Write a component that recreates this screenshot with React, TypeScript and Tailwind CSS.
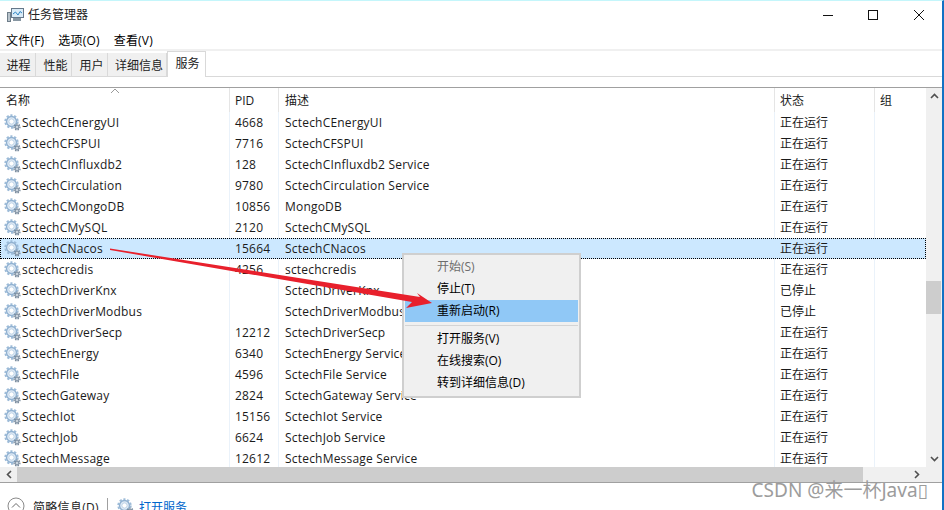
import React from 'react';

const services = [
  ['SctechCEnergyUI', '4668', 'SctechCEnergyUI', '正在运行'],
  ['SctechCFSPUI', '7716', 'SctechCFSPUI', '正在运行'],
  ['SctechCInfluxdb2', '128', 'SctechCInfluxdb2 Service', '正在运行'],
  ['SctechCirculation', '9780', 'SctechCirculation Service', '正在运行'],
  ['SctechCMongoDB', '10856', 'MongoDB', '正在运行'],
  ['SctechCMySQL', '2120', 'SctechCMySQL', '正在运行'],
  ['SctechCNacos', '15664', 'SctechCNacos', '正在运行'],
  ['sctechcredis', '4256', 'sctechcredis', '正在运行'],
  ['SctechDriverKnx', '', 'SctechDriverKnx', '已停止'],
  ['SctechDriverModbus', '', 'SctechDriverModbus', '已停止'],
  ['SctechDriverSecp', '12212', 'SctechDriverSecp', '正在运行'],
  ['SctechEnergy', '6340', 'SctechEnergy Service', '正在运行'],
  ['SctechFile', '4596', 'SctechFile Service', '正在运行'],
  ['SctechGateway', '2824', 'SctechGateway Service', '正在运行'],
  ['SctechIot', '15156', 'SctechIot Service', '正在运行'],
  ['SctechJob', '6624', 'SctechJob Service', '正在运行'],
  ['SctechMessage', '12612', 'SctechMessage Service', '正在运行'],
];

const tabs = [
  { label: '进程', cls: 'w-[36px] pl-[2px]' },
  { label: '性能', cls: 'w-[36px] pl-[4px]' },
  { label: '用户', cls: 'w-[36px] pl-[4px]' },
  { label: '详细信息', cls: 'w-[59px] pl-[4px]' },
];

function Gears() {
  return (
    <svg width="17" height="17" viewBox="0 0 17 17" className="shrink-0">
      <circle cx="7.5" cy="7.5" r="5" fill="#dfeaf5" stroke="#8fb0d0" strokeWidth="1.4" />
      <circle cx="7.5" cy="7.5" r="6.2" fill="none" stroke="#9dbbd8" strokeWidth="2" strokeDasharray="2.2 1.7" />
      <circle cx="7.5" cy="7.5" r="2.6" fill="#fff" stroke="#b4cce2" strokeWidth="0.8" />
      <circle cx="13" cy="13" r="2" fill="#c9d3dc" stroke="#6f8296" strokeWidth="1" />
      <circle cx="13" cy="13" r="3" fill="none" stroke="#75889b" strokeWidth="1.2" strokeDasharray="1.4 1.2" />
    </svg>
  );
}

function MenuItem({ label, disabled, active }: { label: string; disabled?: boolean; active?: boolean }) {
  return (
    <div
      className={`h-[22px] pl-[32px] flex items-center pb-px ${active ? 'bg-[#90c8f6]' : ''} ${disabled ? 'text-[#6d6d6d]' : 'text-black'}`}
    >
      {label}
    </div>
  );
}

export default function App() {
  return (
    <div
      className="relative w-[944px] h-[510px] overflow-hidden bg-white text-[12px] text-[#1a1a1a] border-t border-t-[#c4f6fb] border-r-2 border-r-[#1272c4] flex flex-col"
      style={{ fontFamily: '"Open Sans", "Noto Sans CJK SC", sans-serif' }}
    >
      {/* title bar */}
      <div className="h-[28px] shrink-0 flex items-center pl-[7px]">
        <svg width="17" height="16" viewBox="0 0 17 16" className="shrink-0">
          <rect x="4.5" y="1.5" width="12" height="9" fill="#d9ebf7" stroke="#66788a" />
          <path d="M6 7 L8.5 5 L11 8 L13 4.5 L15 6" fill="none" stroke="#2f86c4" strokeWidth="1" />
          <rect x="0.5" y="5.5" width="3" height="9" fill="#b9c4cc" stroke="#6f7e8a" />
          <rect x="6" y="11" width="8" height="3" fill="#8796a2" />
        </svg>
        <span className="ml-[4px] text-[#222]">任务管理器</span>
        <div className="ml-auto flex items-center pr-[5px]">
          <svg width="45" height="28" viewBox="0 0 45 28">
            <path d="M13 14.5 H23" stroke="#111" strokeWidth="1" />
          </svg>
          <svg width="46" height="28" viewBox="0 0 46 28">
            <rect x="13.5" y="9.5" width="9" height="9" fill="none" stroke="#111" />
          </svg>
          <svg width="36" height="28" viewBox="0 0 36 28">
            <path d="M13 9 L23 19 M23 9 L13 19" stroke="#111" strokeWidth="1" />
          </svg>
        </div>
      </div>

      {/* menu bar */}
      <div className="h-[20px] shrink-0 flex items-center pl-[6px] pt-[3px] gap-[14px] text-black tracking-[0.2px]">
        <span>文件(F)</span>
        <span>选项(O)</span>
        <span>查看(V)</span>
      </div>

      {/* tab strip */}
      <div className="h-[28px] shrink-0 border-t-2 border-t-[#f0f0f0] border-b border-b-[#d9d9d9] flex items-end">
        {tabs.map((t) => (
          <div
            key={t.label}
            className={`${t.cls} h-[23px] bg-[#f0f0f0] border-r border-r-[#d9d9d9] flex items-center justify-center text-[#222] pt-[2px]`}
          >
            {t.label}
          </div>
        ))}
        <div className="w-[39px] h-[26px] -mb-px bg-white border border-[#d9d9d9] border-b-0 flex items-center justify-center text-[#222] pb-[2px] pl-[2px]">
          服务
        </div>
      </div>

      <div className="h-[10px] shrink-0" />

      {/* list */}
      <div className="flex-1 min-h-0 border-t border-t-[#a0a0a0] flex flex-col">
        <div className="h-[379px] shrink-0 flex">
          <div className="w-[926px] shrink-0 flex flex-col">
            <div className="relative h-[24px] shrink-0 grid grid-cols-[229px_49px_496px_100px_52px] items-center">
              <svg width="10" height="6" viewBox="0 0 10 6" className="absolute left-[110px] top-0">
                <path d="M1 5 L5 1 L9 5" fill="none" stroke="#9a9a9a" />
              </svg>
              <span className="pl-[6px] h-full flex items-center pt-[1px]">名称</span>
              <span className="pl-[5px] h-full flex items-center pt-[1px] border-l border-l-[#e5e5e5]">PID</span>
              <span className="pl-[6px] h-full flex items-center pt-[1px] border-l border-l-[#e5e5e5]">描述</span>
              <span className="pl-[5px] h-full flex items-center pt-[1px] border-l border-l-[#e5e5e5]">状态</span>
              <span className="pl-[5px] h-full flex items-center pt-[1px] border-l border-l-[#e5e5e5]">组</span>
            </div>
            {services.map((s) => {
              const selected = s[0] === 'SctechCNacos';
              const line = selected ? 'border-l-transparent' : 'border-l-[#eaf2fa]';
              return (
                <div
                  key={s[0]}
                  className={`h-[21px] shrink-0 grid grid-cols-[229px_49px_496px_100px_52px] items-center ${
                    selected ? 'bg-[#cce8ff] outline-1 outline-dotted outline-black -outline-offset-1' : ''
                  }`}
                >
                  <span className="h-full flex items-center pl-[4px] gap-[1px] tracking-[0.2px]">
                    <Gears />
                    {s[0]}
                  </span>
                  <span className={`h-full flex items-center pl-[5px] border-l tracking-[0.2px] ${line}`}>{s[1]}</span>
                  <span className={`h-full flex items-center pl-[6px] border-l tracking-[0.2px] ${line}`}>{s[2]}</span>
                  <span className={`h-full flex items-center pl-[5px] border-l ${line}`}>{s[3]}</span>
                  <span className={`h-full border-l ${line}`} />
                </div>
              );
            })}
          </div>
          {/* vertical scrollbar */}
          <div className="flex-1 bg-[#f0f0f0] flex flex-col items-center justify-between py-[5px] relative">
            <svg width="9" height="6" viewBox="0 0 9 6">
              <path d="M1 5 L4.5 1.5 L8 5" fill="none" stroke="#505050" strokeWidth="1.6" />
            </svg>
            <div className="absolute left-0 right-px top-[193px] h-[33px] bg-[#cdcdcd]" />
            <svg width="9" height="6" viewBox="0 0 9 6">
              <path d="M1 1 L4.5 4.5 L8 1" fill="none" stroke="#505050" strokeWidth="1.6" />
            </svg>
          </div>
        </div>

        {/* horizontal scrollbar */}
        <div className="h-[16px] shrink-0 bg-[#f0f0f0] flex items-center border-b border-b-[#a0a0a0]">
          <div className="w-[17px] shrink-0 flex justify-center">
            <svg width="6" height="9" viewBox="0 0 6 9">
              <path d="M5 1 L1.5 4.5 L5 8" fill="none" stroke="#505050" strokeWidth="1.6" />
            </svg>
          </div>
          <div className="w-[846px] h-full bg-[#cdcdcd]" />
          <div className="w-[51px]" />
          <svg width="6" height="9" viewBox="0 0 6 9">
            <path d="M1 1 L4.5 4.5 L1 8" fill="none" stroke="#505050" strokeWidth="1.6" />
          </svg>
        </div>

        {/* footer */}
        <div className="flex-1 flex items-start pt-[15px] pl-[7px] leading-[16px]">
          <svg width="18" height="18" viewBox="0 0 18 18" className="shrink-0 -mt-[1px]">
            <circle cx="9" cy="9" r="8" fill="none" stroke="#8a8a8a" />
            <path d="M5 10.5 L9 6.5 L13 10.5" fill="none" stroke="#6a6a6a" />
          </svg>
          <span className="ml-[8px] mt-[2px] text-[#222] tracking-[0.3px]">简略信息(D)</span>
          <div className="ml-[8px] w-px h-[18px] bg-[#a0a0a0]" />
          <div className="ml-[9px]">
            <Gears />
          </div>
          <span className="ml-[5px] mt-[2px] text-[#0066cc]">打开服务</span>
        </div>
      </div>

      {/* context menu */}
      <div className="absolute left-[402px] top-[252px] w-[179px] h-[145px] bg-[#f0f0f0] border-2 border-[#cfcfcf] px-[1px] pt-[1px] flex flex-col">
        <MenuItem label="开始(S)" disabled />
        <MenuItem label="停止(T)" />
        <MenuItem label="重新启动(R)" active />
        <div className="h-px bg-[#d4d4d4] mt-[3px] mb-[2px]" />
        <MenuItem label="打开服务(V)" />
        <MenuItem label="在线搜索(O)" />
        <MenuItem label="转到详细信息(D)" />
      </div>

      {/* annotation arrow */}
      <svg className="absolute left-0 top-0 pointer-events-none" width="944" height="510" viewBox="0 0 944 510">
        <path d="M110 247.5 L420 296 L417 292 L432 302 L406 307 L412 301 L110 249 Z" fill="#e8202c" />
      </svg>

      {/* watermark */}
      <div
        className="absolute right-[14px] top-[478px] text-[19px] text-[#9c9c9c] leading-[22px]"
        style={{ fontFamily: '"Noto Sans", "Noto Sans CJK SC", "DejaVu Sans", sans-serif' }}
      >
        CSDN @来一杯Java▯
      </div>
    </div>
  );
}
